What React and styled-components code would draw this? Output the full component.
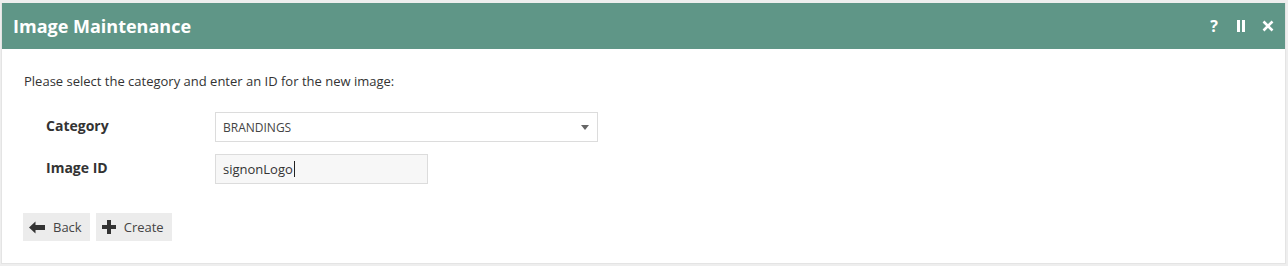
import React from "react";
import styled, { createGlobalStyle } from "styled-components";

const GlobalStyle = createGlobalStyle`
  html, body {
    margin: 0;
    padding: 0;
    background: #eeeeee;
    font-family: "Open Sans", "Liberation Sans", sans-serif;
    color: #333;
  }
`;

const Page = styled.div`
  padding: 3px 2px 3px 1px;
`;

const Panel = styled.div`
  background: #fff;
  border: 1px solid #e4e4e4;
  border-top: none;
  display: flex;
  flex-direction: column;
`;

const Header = styled.div`
  height: 46px;
  background: #5f9687;
  display: flex;
  align-items: center;
  justify-content: space-between;
  padding: 0 10px 0 11px;
`;

const Title = styled.h1`
  margin: 0;
  font-size: 18px;
  font-weight: 700;
  color: #fff;
`;

const Tools = styled.div`
  display: flex;
  align-items: center;
  gap: 13px;
`;

const Tool = styled.span`
  display: flex;
  align-items: center;
  justify-content: center;
  width: 14px;
  height: 14px;
  color: #fff;
  font-size: 16px;
  font-weight: 700;
  cursor: pointer;
`;

const Body = styled.div`
  padding: 23px 22px 22px 22px;
`;

const Intro = styled.p`
  margin: 0 0 22px 0;
  font-size: 13px;
  line-height: 18px;
`;

const Row = styled.div`
  display: flex;
  align-items: center;
  margin-bottom: 12px;
  padding-left: 22px;
`;

const Label = styled.label`
  width: 169px;
  font-size: 14px;
  font-weight: 700;
  margin-top: -3px;
`;

const SelectBox = styled.div`
  width: 383px;
  height: 30px;
  box-sizing: border-box;
  border: 1px solid #dcdcdc;
  background: #fff;
  display: flex;
  align-items: center;
  justify-content: space-between;
  padding: 0 8px 0 7px;
  font-size: 12px;
  color: #444;
`;

const Caret = styled.span`
  width: 0;
  height: 0;
  border-left: 4px solid transparent;
  border-right: 4px solid transparent;
  border-top: 5px solid #666;
`;

const TextInput = styled.div`
  width: 213px;
  height: 30px;
  box-sizing: border-box;
  border: 1px solid #dcdcdc;
  background: #f7f7f7;
  display: flex;
  align-items: center;
  padding: 0 7px;
  font-size: 13px;
  color: #333;
`;

const Cursor = styled.span`
  display: inline-block;
  width: 1px;
  height: 16px;
  background: #222;
  margin-left: 1px;
`;

const Actions = styled.div`
  display: flex;
  gap: 6px;
  margin-top: 29px;
  margin-left: -1px;
`;

const Button = styled.button`
  height: 28px;
  border: none;
  background: #ececec;
  display: flex;
  align-items: center;
  gap: 8px;
  padding: 0 8px 0 6px;
  font-family: inherit;
  font-size: 13px;
  color: #444;
  cursor: pointer;
`;

const ArrowLeft = () => (
  <svg width="16" height="13" viewBox="0 0 16 13">
    <path d="M0 6.5 L6.5 0.5 L6.5 4 L16 4 L16 9 L6.5 9 L6.5 12.5 Z" fill="#333" />
  </svg>
);

const Plus = () => (
  <svg width="14" height="14" viewBox="0 0 14 14">
    <path d="M5 0 H9 V5 H14 V9 H9 V14 H5 V9 H0 V5 H5 Z" fill="#333" />
  </svg>
);

const Pause = () => (
  <svg width="10" height="12" viewBox="0 0 10 12">
    <rect x="1" y="0" width="3" height="12" fill="#fff" />
    <rect x="6" y="0" width="3" height="12" fill="#fff" />
  </svg>
);

const Close = () => (
  <svg width="12" height="12" viewBox="0 0 12 12">
    <path d="M1.5 1.5 L10.5 10.5 M10.5 1.5 L1.5 10.5" stroke="#fff" strokeWidth="2.6" />
  </svg>
);

export default function App() {
  return (
    <>
      <GlobalStyle />
      <Page>
        <Panel>
          <Header>
            <Title>Image Maintenance</Title>
            <Tools>
              <Tool>?</Tool>
              <Tool>
                <Pause />
              </Tool>
              <Tool>
                <Close />
              </Tool>
            </Tools>
          </Header>
          <Body>
            <Intro>Please select the category and enter an ID for the new image:</Intro>
            <Row>
              <Label>Category</Label>
              <SelectBox>
                BRANDINGS
                <Caret />
              </SelectBox>
            </Row>
            <Row>
              <Label>Image ID</Label>
              <TextInput>
                signonLogo
                <Cursor />
              </TextInput>
            </Row>
            <Actions>
              <Button>
                <ArrowLeft />
                Back
              </Button>
              <Button>
                <Plus />
                Create
              </Button>
            </Actions>
          </Body>
        </Panel>
      </Page>
    </>
  );
}
